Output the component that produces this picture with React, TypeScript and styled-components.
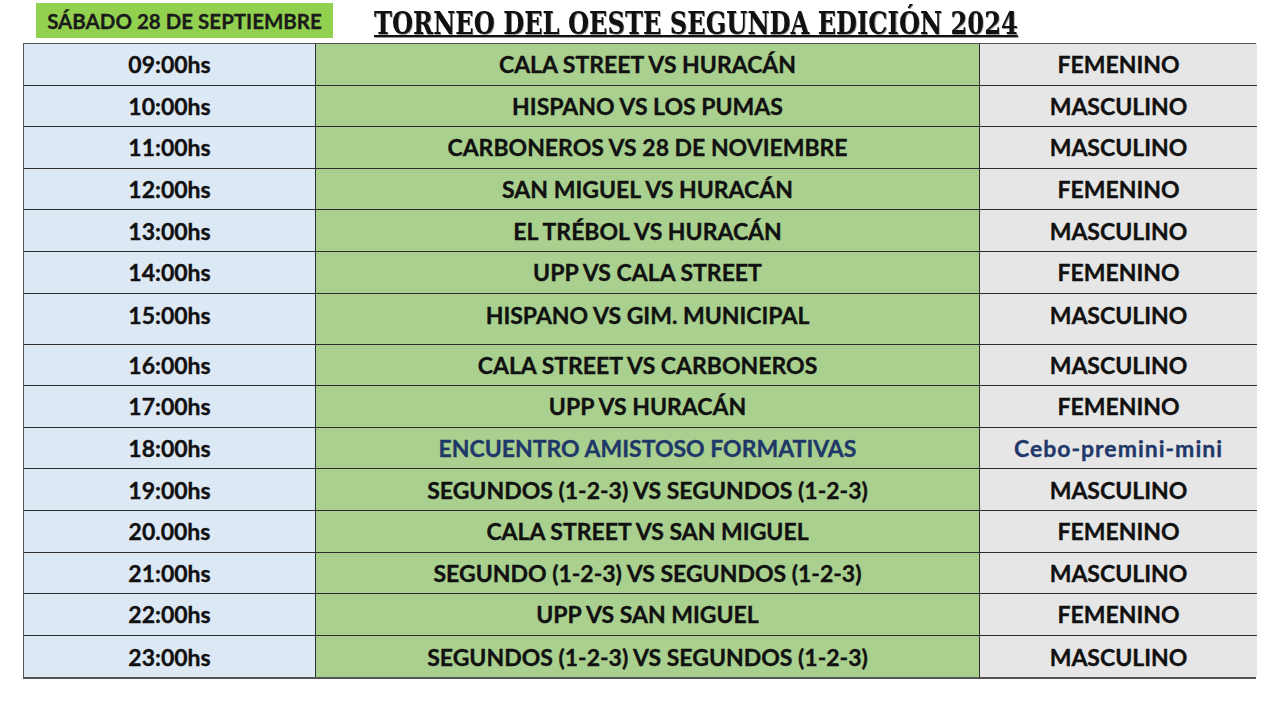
import React from 'react';
import styled, { createGlobalStyle } from 'styled-components';

const GlobalStyle = createGlobalStyle`
  body {
    margin: 0;
    background: #ffffff;
    font-family: 'Lato', 'Open Sans', sans-serif;
  }
`;

const Page = styled.div`
  width: 1280px;
  height: 720px;
  padding-left: 23px;
  box-sizing: border-box;
  overflow: hidden;
`;

const Header = styled.div`
  display: flex;
  align-items: flex-start;
  height: 43px;
`;

const DayLabel = styled.div`
  margin: 3px 0 0 13px;
  width: 297px;
  height: 35px;
  background: #92d050;
  color: #1a1a1a;
  font-weight: 700;
  font-size: 20.5px;
  -webkit-text-stroke: 0.3px #1a1a1a;
  display: flex;
  align-items: center;
  justify-content: center;
`;

const Title = styled.h1`
  margin: 7px 0 0 41px;
  font-family: 'DejaVu Serif', 'Liberation Serif', serif;
  font-weight: 700;
  font-size: 31px;
  line-height: 32px;
  color: #111;
  transform: scaleX(0.78);
  transform-origin: left center;
  white-space: nowrap;
  text-decoration: underline;
  text-decoration-thickness: 2px;
  text-underline-offset: 1px;
  text-shadow: 1px 1px 0 #9a9a9a;
`;

const Table = styled.div`
  width: 1233px;
  display: grid;
  grid-template-columns: 292px 664px 277px;
  border: 1px solid #555;
  border-bottom-width: 2px;
  box-sizing: border-box;
`;

const Cell = styled.div<{ $kind: 'time' | 'match' | 'cat'; $tall?: boolean; $blue?: boolean }>`
  height: ${(p) => (p.$tall ? 51 : 41.6)}px;
  display: flex;
  align-items: ${(p) => (p.$tall ? 'flex-start' : 'center')};
  padding-top: ${(p) => (p.$tall ? 7 : 0)}px;
  justify-content: center;
  box-sizing: border-box;
  border-bottom: 1px solid #2e2e2e;
  border-right: ${(p) => (p.$kind === 'cat' ? 'none' : '1px solid #2e2e2e')};
  background: ${(p) =>
    p.$kind === 'time' ? '#dde8f5' : p.$kind === 'match' ? '#a9d08e' : '#e7e6e6'};
  color: ${(p) => (p.$blue ? '#1f3869' : '#111')};
  -webkit-text-stroke: 0.35px ${(p) => (p.$blue ? '#1f3869' : '#111')};
  font-weight: 700;
  font-size: 23px;
  letter-spacing: ${(p) => (p.$blue && p.$kind === 'cat' ? 1 : 0)}px;
  white-space: nowrap;
  &:nth-last-child(-n + 3) {
    border-bottom: none;
  }
`;

type Game = { time: string; match: string; cat: string; tall?: boolean; blue?: boolean };

const games: Game[] = [
  { time: '09:00hs', match: 'CALA STREET VS HURACÁN', cat: 'FEMENINO' },
  { time: '10:00hs', match: 'HISPANO VS LOS PUMAS', cat: 'MASCULINO' },
  { time: '11:00hs', match: 'CARBONEROS VS 28 DE NOVIEMBRE', cat: 'MASCULINO' },
  { time: '12:00hs', match: 'SAN MIGUEL VS HURACÁN', cat: 'FEMENINO' },
  { time: '13:00hs', match: 'EL TRÉBOL VS HURACÁN', cat: 'MASCULINO' },
  { time: '14:00hs', match: 'UPP VS CALA STREET', cat: 'FEMENINO' },
  { time: '15:00hs', match: 'HISPANO VS GIM. MUNICIPAL', cat: 'MASCULINO', tall: true },
  { time: '16:00hs', match: 'CALA STREET VS CARBONEROS', cat: 'MASCULINO' },
  { time: '17:00hs', match: 'UPP VS HURACÁN', cat: 'FEMENINO' },
  { time: '18:00hs', match: 'ENCUENTRO AMISTOSO FORMATIVAS', cat: 'Cebo-premini-mini', blue: true },
  { time: '19:00hs', match: 'SEGUNDOS (1-2-3) VS SEGUNDOS (1-2-3)', cat: 'MASCULINO' },
  { time: '20.00hs', match: 'CALA STREET VS SAN MIGUEL', cat: 'FEMENINO' },
  { time: '21:00hs', match: 'SEGUNDO (1-2-3) VS SEGUNDOS (1-2-3)', cat: 'MASCULINO' },
  { time: '22:00hs', match: 'UPP VS SAN MIGUEL', cat: 'FEMENINO' },
  { time: '23:00hs', match: 'SEGUNDOS (1-2-3) VS SEGUNDOS (1-2-3)', cat: 'MASCULINO' },
];

const App = () => {
  return (
    <Page>
      <GlobalStyle />
      <Header>
        <DayLabel>SÁBADO 28 DE SEPTIEMBRE</DayLabel>
        <Title>TORNEO DEL OESTE SEGUNDA EDICIÓN 2024</Title>
      </Header>
      <Table>
        {games.map((g) => (
          <React.Fragment key={g.time}>
            <Cell $kind="time" $tall={g.tall}>{g.time}</Cell>
            <Cell $kind="match" $tall={g.tall} $blue={g.blue}>{g.match}</Cell>
            <Cell $kind="cat" $tall={g.tall} $blue={g.blue}>{g.cat}</Cell>
          </React.Fragment>
        ))}
      </Table>
    </Page>
  );
};

export default App;
